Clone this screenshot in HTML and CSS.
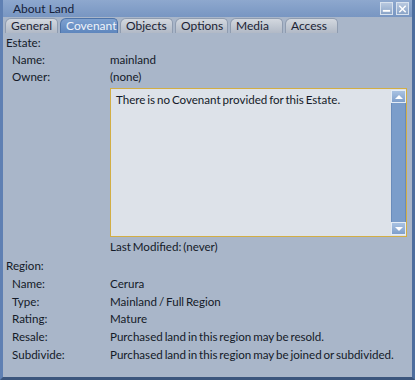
FILE: index.html
```html
<!DOCTYPE html>
<html>
<head>
<meta charset="utf-8">
<link rel="stylesheet" href="styles.css">
</head>
<body>
<div class="window">
  <div class="titlebar">
    <span class="title">About Land</span>
    <div class="tbtns">
      <span class="tbtn"><svg width="12" height="12" viewBox="0 0 12 12"><rect x="2" y="7" width="8" height="2" fill="#fff"/></svg></span>
      <span class="tbtn"><svg width="12" height="12" viewBox="0 0 12 12"><path d="M2.5 2.5 L9.5 9.5 M9.5 2.5 L2.5 9.5" stroke="#fff" stroke-width="1.6"/></svg></span>
    </div>
  </div>
  <div class="tabs">
    <span class="tab">General</span>
    <span class="tab active">Covenant</span>
    <span class="tab">Objects</span>
    <span class="tab">Options</span>
    <span class="tab">Media</span>
    <span class="tab">Access</span>
  </div>
  <div class="content">
    <div class="section">Estate:</div>
    <div class="grid">
      <span class="lbl">Name:</span><span>mainland</span>
      <span class="lbl">Owner:</span><span>(none)</span>
    </div>
    <div class="boxrow">
      <div class="textbox">
        <div class="tbtext">There is no Covenant provided for this Estate.</div>
        <div class="scroll">
          <span class="sbtn"><svg width="12" height="10" viewBox="0 0 12 10"><path d="M2 7 L6 3 L10 7 Z" fill="#fff"/></svg></span>
          <span class="track"></span>
          <span class="sbtn"><svg width="12" height="10" viewBox="0 0 12 10"><path d="M2 3 L6 7 L10 3 Z" fill="#fff"/></svg></span>
        </div>
      </div>
      <div class="modified">Last Modified: (never)</div>
    </div>
    <div class="section region">Region:</div>
    <div class="grid grid2">
      <span class="lbl">Name:</span><span>Cerura</span>
      <span class="lbl">Type:</span><span>Mainland / Full Region</span>
      <span class="lbl">Rating:</span><span>Mature</span>
      <span class="lbl">Resale:</span><span>Purchased land in this region may be resold.</span>
      <span class="lbl">Subdivide:</span><span>Purchased land in this region may be joined or subdivided.</span>
    </div>
  </div>
</div>
</body>
</html>
```
FILE: styles.css
```css
* { box-sizing: border-box; }
html, body { margin: 0; padding: 0; background: #2f4668; }
body { font-family: "Lato", "Open Sans", sans-serif; font-size: 11.6px; word-spacing: -1.1px; color: #141a28; }
.window {
  width: 415px; height: 380px;
  background: #a9b6c9;
  border-left: 3px solid #5f80b3;
  border-right: 3px solid #4d6e9e;
  border-bottom: 3px solid #3c567d;
  display: flex; flex-direction: column;
}
.titlebar {
  height: 17px;
  background: linear-gradient(#8ea8ce, #7896c2);
  display: flex; align-items: center; justify-content: space-between;
  padding-left: 10px; padding-right: 3px;
}
.title { color: #15213a; font-size: 12px; word-spacing: 0; }
.tbtns { display: flex; gap: 3px; }
.tbtn {
  width: 13px; height: 13px; display: flex; align-items: center; justify-content: center;
  background: linear-gradient(#b9c9df, #8aa4c8);
  border: 1px solid #d8e2ee;
}
.tabs { display: flex; gap: 2px; padding: 1px 0 0 2px; height: 16px; }
.tab {
  height: 15px; width: 53px; padding-left: 5px;
  background: linear-gradient(#d3d8df, #b1b9c6);
  border: 1px solid #8f9cb0; border-bottom: none;
  border-radius: 6px 5px 0 0;
  line-height: 14px; font-size: 12px; color: #1b2233; word-spacing: 0;
}
.tab.active { background: linear-gradient(#7ea1d0, #5e86bd); color: #f0f4fa; width: 58px; border-color: #4f74a8; }
.content { padding: 1px 0 0 3px; }
.section { height: 17px; line-height: 17px; }
.grid { display: grid; grid-template-columns: 98px 1fr; grid-auto-rows: 17px; align-items: center; padding-left: 6px; }
.grid2 { grid-auto-rows: 17.6px; padding-top: 1px; }
.boxrow { padding-left: 104px; padding-top: 3px; }
.textbox {
  width: 297px; height: 149px; background: #dde2e9;
  border: 1px solid #d2ae45;
  display: flex; justify-content: space-between;
}
.tbtext { padding: 4px 0 0 5px; }
.scroll { width: 15px; display: flex; flex-direction: column; padding: 1px 0; }
.sbtn { height: 13px; background: linear-gradient(#a9c2e2, #7f9fcb); border: 1px solid #e4ecf6; display: flex; align-items: center; justify-content: center; }
.track { flex: 1; background: #7b9dca; border-left: 1px solid #6a8cbb; border-right: 1px solid #6a8cbb; }
.modified { height: 19px; line-height: 19px; }
.region { margin-top: 1px; }
```
